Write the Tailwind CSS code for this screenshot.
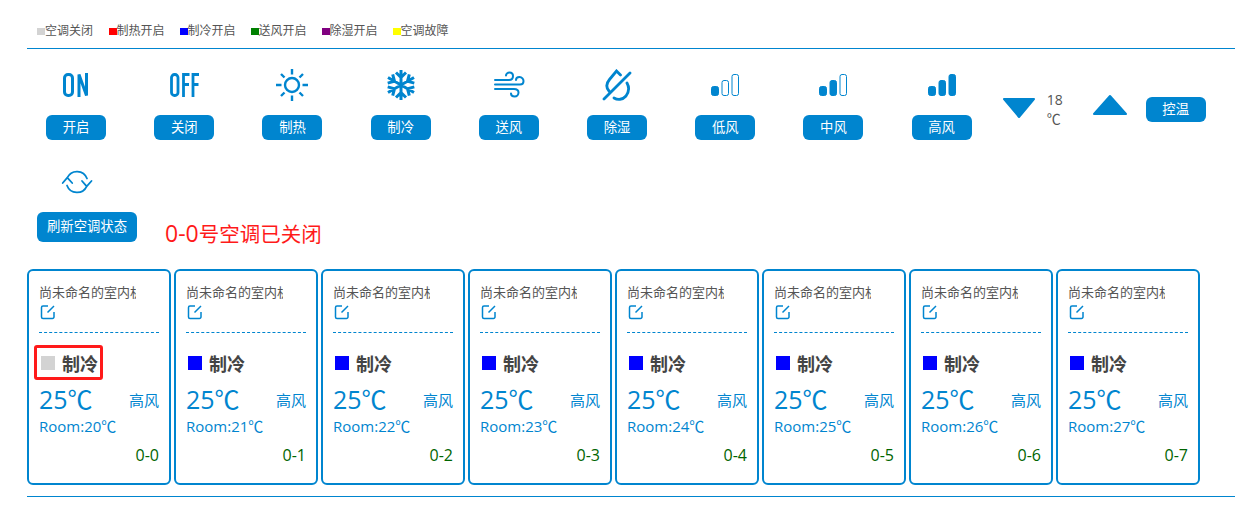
<!DOCTYPE html>
<html lang="en">
<head>
    <meta charset="UTF-8">
    <title>空调控制</title>
    <script src="https://cdn.jsdelivr.net/npm/@tailwindcss/browser@4"></script>
</head>
<body class="bg-white font-['Open_Sans','Noto_Sans_CJK_SC',sans-serif] text-[#333] overflow-hidden">
<div class="w-[1249px] h-[520px] pl-[27px] pr-[14px]">

  <!-- legend -->
  <div class="h-[49px] border-b border-[#0085cf] pl-[10px] pt-[13px] flex text-[12px] leading-[18px] text-[#555]">
    <span class="w-[71.500px] flex items-center"><i class="w-[8px] h-[7px] bg-[#d3d3d3] mt-[2px]"></i>空调关闭</span>
    <span class="w-[71px] flex items-center"><i class="w-[8px] h-[7px] bg-[#ff0000] mt-[2px]"></i>制热开启</span>
    <span class="w-[71px] flex items-center"><i class="w-[8px] h-[7px] bg-[#0000ff] mt-[2px]"></i>制冷开启</span>
    <span class="w-[71px] flex items-center"><i class="w-[8px] h-[7px] bg-[#008000] mt-[2px]"></i>送风开启</span>
    <span class="w-[71px] flex items-center"><i class="w-[8px] h-[7px] bg-[#800080] mt-[2px]"></i>除湿开启</span>
    <span class="flex items-center"><i class="w-[8px] h-[7px] bg-[#ffff00] mt-[2px]"></i>空调故障</span>
  </div>

  <!-- controls -->
  <div class="flex pt-[20px] -ml-[5px] h-[91px] text-[#0085cf]">
    <div class="w-[108.2px] flex flex-col items-center">
      <svg class="w-[32px] h-[32px]" viewBox="0 0 32 32" fill="none" stroke="currentColor" stroke-width="3"><rect x="4.500" y="5.500" width="8" height="21" rx="3.500"/><path d="M19 28V5.500l7.500 21V4"/></svg>
      <button class="mt-[14px] w-[60px] h-[25px] rounded-[6px] bg-[#0085cf] text-white text-[13.33px]">开启</button>
    </div>
    <div class="w-[108.2px] flex flex-col items-center">
      <svg class="w-[32px] h-[32px]" viewBox="0 0 32 32" fill="none" stroke="currentColor" stroke-width="2.800"><rect x="3.500" y="5.500" width="6.500" height="21" rx="3"/><path d="M15.500 28V5.500h6M15.500 15.500h5.500M25 28V5.500h6M25 15.500h5.500"/></svg>
      <button class="mt-[14px] w-[60px] h-[25px] rounded-[6px] bg-[#0085cf] text-white text-[13.33px]">关闭</button>
    </div>
    <div class="w-[108.2px] flex flex-col items-center">
      <svg class="w-[32px] h-[32px]" viewBox="0 0 32 32" fill="none" stroke="currentColor" stroke-width="2.400"><circle cx="16" cy="16" r="7"/><path d="M16 0v5.500M16 26.500V32M0 16h5.500M26.500 16H32M5 5l3.500 3.500M23.500 23.500L27 27M5 27l3.500-3.500M23.500 8.500L27 5"/></svg>
      <button class="mt-[14px] w-[60px] h-[25px] rounded-[6px] bg-[#0085cf] text-white text-[13.33px]">制热</button>
    </div>
    <div class="w-[108.2px] flex flex-col items-center">
      <svg class="w-[32px] h-[32px]" viewBox="0 0 32 32" fill="none" stroke="currentColor" stroke-width="3"><path d="M16 1v30M3 8.500l26 15M3 23.500l26-15M11 3.500l5 5 5-5M11 28.500l5-5 5 5M24.300 26.600l-1.800-6.850 6.800-1.850M24.300 5.400l-1.800 6.850 6.800 1.850M7.700 26.600l1.800-6.850-6.800-1.850M7.700 5.400l1.800 6.850-6.800 1.850"/></svg>
      <button class="mt-[14px] w-[60px] h-[25px] rounded-[6px] bg-[#0085cf] text-white text-[13.33px]">制冷</button>
    </div>
    <div class="w-[108.2px] flex flex-col items-center">
      <svg class="w-[32px] h-[32px]" viewBox="0 0 32 32" fill="none" stroke="currentColor" stroke-width="2" stroke-linecap="round"><path d="M2 11h14c3 0 4-2 4-4s-1.500-3.500-3.500-3.500S13 5 13 6.500M2 15.500h25c2.500 0 3.500-1.800 3.500-3.500S29 8 26.500 8 23 9.500 23 11M2 20h19c3 0 4.500 1.500 4.500 3.500s-1.500 4-3.800 4-3.700-1.500-3.700-3"/></svg>
      <button class="mt-[14px] w-[60px] h-[25px] rounded-[6px] bg-[#0085cf] text-white text-[13.33px]">送风</button>
    </div>
    <div class="w-[108.2px] flex flex-col items-center">
      <svg class="w-[32px] h-[32px]" viewBox="0 0 32 32" fill="none" stroke="currentColor" stroke-width="2.800" stroke-linecap="round"><path d="M3 30L29 4M8 22C4.500 18 6 13.500 8.500 10.500L15.500 2l4 4M26 14C28.500 18.500 28 23 25 27 21.500 31 16.500 31 13 29"/></svg>
      <button class="mt-[14px] w-[60px] h-[25px] rounded-[6px] bg-[#0085cf] text-white text-[13.33px]">除湿</button>
    </div>
    <div class="w-[108.2px] flex flex-col items-center">
      <svg class="w-[32px] h-[32px]" viewBox="0 0 32 32" fill="currentColor" stroke="currentColor"><rect x="2.500" y="17.500" width="7" height="9" rx="2"/><rect x="13" y="11.500" width="6.500" height="15" rx="2" fill="none"/><rect x="23" y="5.500" width="6.500" height="21" rx="2" fill="none"/></svg>
      <button class="mt-[14px] w-[60px] h-[25px] rounded-[6px] bg-[#0085cf] text-white text-[13.33px]">低风</button>
    </div>
    <div class="w-[108.2px] flex flex-col items-center">
      <svg class="w-[32px] h-[32px]" viewBox="0 0 32 32" fill="currentColor" stroke="currentColor"><rect x="2.500" y="17.500" width="7" height="9" rx="2"/><rect x="13" y="11.500" width="6.500" height="15" rx="2"/><rect x="23" y="5.500" width="6.500" height="21" rx="2" fill="none"/></svg>
      <button class="mt-[14px] w-[60px] h-[25px] rounded-[6px] bg-[#0085cf] text-white text-[13.33px]">中风</button>
    </div>
    <div class="w-[108.2px] flex flex-col items-center">
      <svg class="w-[32px] h-[32px]" viewBox="0 0 32 32" fill="currentColor" stroke="currentColor"><rect x="2.500" y="17.500" width="7" height="9" rx="2"/><rect x="13" y="11.500" width="6.500" height="15" rx="2"/><rect x="23" y="5.500" width="6.500" height="21" rx="2"/></svg>
      <button class="mt-[14px] w-[60px] h-[25px] rounded-[6px] bg-[#0085cf] text-white text-[13.33px]">高风</button>
    </div>
    <div class="flex items-start">
      <svg class="w-[34px] h-[24px] mt-[27px] ml-[6px]" viewBox="0 0 34 24" fill="currentColor" stroke="currentColor" stroke-width="2" stroke-linejoin="round"><path d="M2 3h30L17 21z"/></svg>
      <div class="w-[28px] ml-[11px] mt-[21px] text-[14px] leading-[19px] text-[#555]">18<br>℃</div>
      <svg class="w-[36px] h-[24px] mt-[24px] ml-[17px]" viewBox="0 0 36 24" fill="currentColor" stroke="currentColor" stroke-width="2" stroke-linejoin="round"><path d="M18 3L34 21H2z"/></svg>
      <button class="mt-[28px] ml-[18px] w-[60px] h-[25px] rounded-[6px] bg-[#0085cf] text-white text-[13.33px]">控温</button>
    </div>
  </div>

  <!-- refresh -->
  <div class="flex h-[129px] text-[#0085cf]">
    <div class="w-[100px] ml-[10px] flex flex-col items-start">
      <svg class="w-[32px] h-[32px] mt-[26px] ml-[24px]" viewBox="0 0 32 32" fill="none" stroke="currentColor" stroke-width="1.800" stroke-linecap="round" stroke-linejoin="round"><path d="M6.300 11.700A10.700 10.700 0 0 1 26 12.500M25.700 20.300A10.700 10.700 0 0 1 6 19.500M1.700 17l4.600-5.300 4.900 5.300M21 15l4.700 5.300 4.800-5.300"/></svg>
      <button class="mt-[14px] w-[100px] h-[30px] rounded-[6px] bg-[#0085cf] text-white text-[13.33px]">刷新空调状态</button>
    </div>
    <div class="ml-[28px] mt-[78px] text-[20.500px] leading-[30px] text-[#ff1a1a] whitespace-nowrap"><span class="text-[23px]">0-0</span>号空调已关闭</div>
  </div>

  <!-- cards -->
  <div id="cards" class="flex gap-[3px] h-[228px] border-b border-[#0085cf]"></div>
</div>

<script>
const pencil = `<svg class="w-[16px] h-[16px] ml-[1px] text-[#0085cf]" viewBox="0 0 16 16" fill="none" stroke="currentColor" stroke-width="1.500"><path d="M8 2H3a1.500 1.500 0 0 0-1.500 1.500v9.500A1.500 1.500 0 0 0 3 14.500h9.500A1.500 1.500 0 0 0 14 13V8M7.500 8.500L14 2"/></svg>`;
const cards = document.getElementById("cards");
for (let i = 0; i < 8; i++) {
  const off = i === 0;
  cards.insertAdjacentHTML("beforeend", `
    <div class="w-[144px] h-[216px] rounded-[6px] border-2 border-[#0085cf] px-[10px] pt-[13px] relative">
      <div class="w-[97px] h-[20px] overflow-hidden whitespace-nowrap text-[13px] leading-[16px] text-[#555]">尚未命名的室内机组</div>
      ${pencil}
      <div class="mt-[12px] border-t border-dashed border-[#0085cf]"></div>
      <div class="mt-[13px] h-[36px] flex items-center relative">
        ${off ? '<div class="absolute -left-[5px] -top-[1px] w-[69px] h-[35px] rounded-[3px] border-[3px] border-[#ff1a1a]"></div>' : ''}
        <i class="w-[14px] h-[14px] mt-[-2px] ml-[2px] ${off ? 'bg-[#d3d3d3]' : 'bg-[#0000ff]'}"></i>
        <span class="ml-[7px] text-[18px] font-bold text-[#444]">制冷</span>
      </div>
      <div class="mt-[1px] flex justify-between items-center text-[#0085cf]">
        <span class="text-[25px] leading-[32px]">25℃</span>
        <span class="text-[15px] mt-[2px]">高风</span>
      </div>
      <div class="text-[15px] leading-[20px] mt-[1px] text-[#0085cf]">Room:${20 + i}℃</div>
      <div class="absolute right-[10px] bottom-[18px] text-[16px] leading-[20px] text-[#006400]">0-${i}</div>
    </div>`);
}
</script>
</body>
</html>
